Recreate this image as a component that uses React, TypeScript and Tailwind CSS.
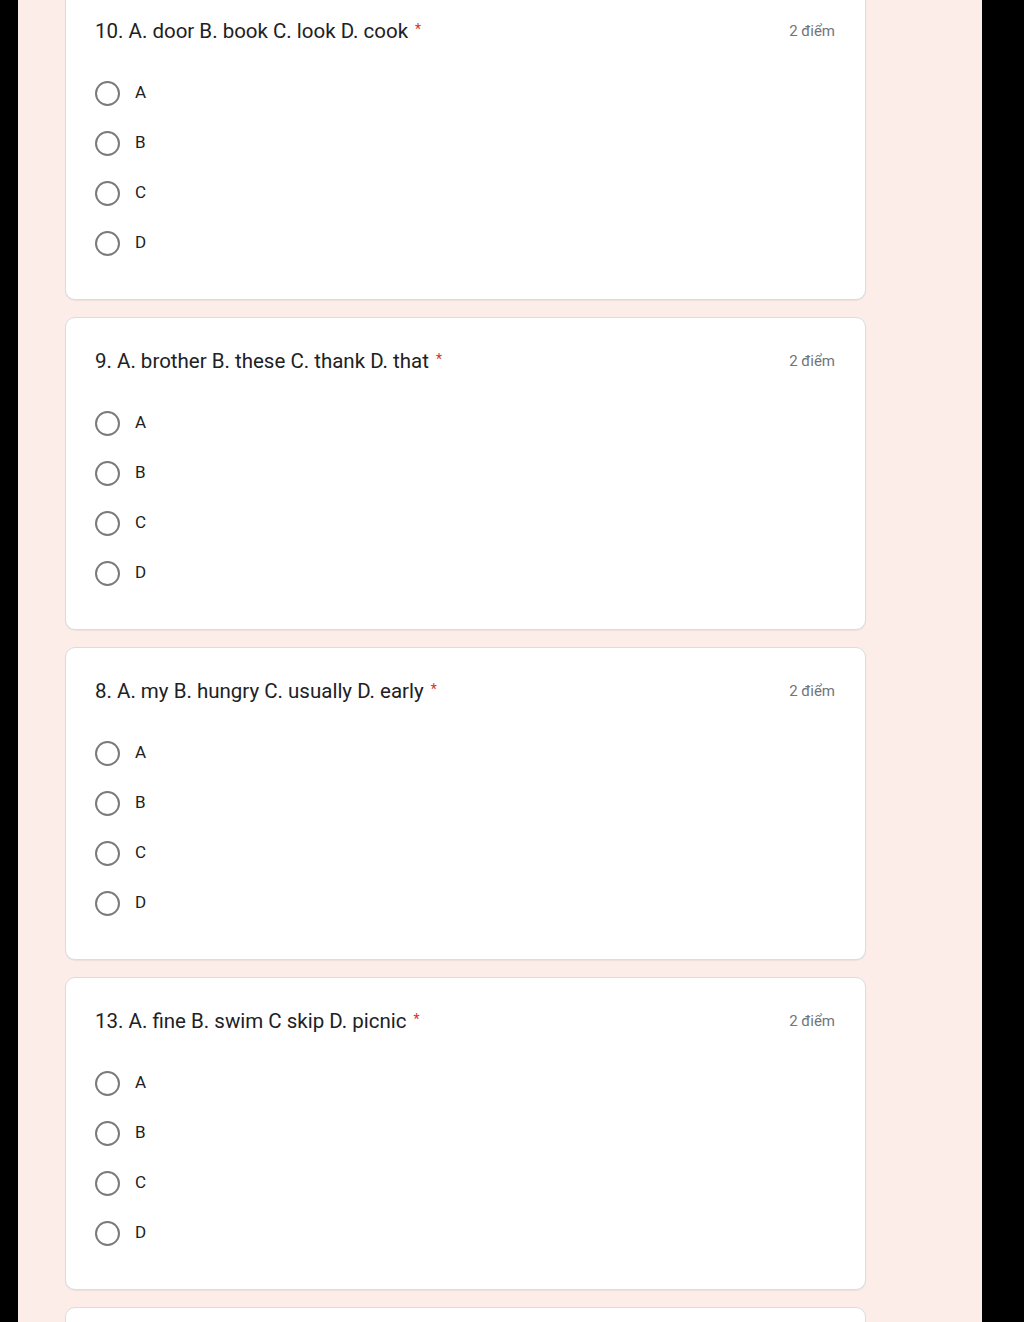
const questions = [
  { title: '10. A. door B. book C. look D. cook' },
  { title: '9. A. brother B. these C. thank D. that' },
  { title: '8. A. my B. hungry C. usually D. early' },
  { title: '13. A. fine B. swim C skip D. picnic' },
];

const options = ['A', 'B', 'C', 'D'];

function QuestionCard({ title }: { title: string }) {
  return (
    <div className="bg-white border border-[#dadce0] rounded-[10px] shadow-[0_1px_1px_rgba(0,0,0,0.06)] pl-[29px] pr-[30px] pt-[30px] pb-[31px]">
      <div className="flex items-center justify-between h-[26px]">
        <div className="text-[20.5px] text-[#202124]">
          {title}
          <span className="text-[#d93025] text-[14px] relative -top-[4px] ml-[7px]">*</span>
        </div>
        <div className="text-[15px] text-[#70757a]">2 điểm</div>
      </div>
      <div className="mt-[24px] flex flex-col">
        {options.map(o => (
          <div key={o} className="h-[50px] flex items-center">
            <span className="w-[25px] h-[25px] rounded-full border-[2.5px] border-[#7a7a7a]" />
            <span className="ml-[15px] text-[17px] text-[#202124]">{o}</span>
          </div>
        ))}
      </div>
    </div>
  );
}

export default function App() {
  return (
    <div className="w-[1024px] h-[1322px] overflow-hidden bg-black flex" style={{ fontFamily: 'Roboto, "Open Sans", sans-serif' }}>
      <div className="ml-[18px] w-[964px] h-full bg-[#fdede8] overflow-hidden">
        <div className="ml-[47px] w-[801px] -mt-[13px] flex flex-col gap-[17px]">
          {questions.map(q => (
            <QuestionCard key={q.title} title={q.title} />
          ))}
          <div className="bg-white border border-[#dadce0] rounded-[10px] h-[300px]" />
        </div>
      </div>
    </div>
  );
}
